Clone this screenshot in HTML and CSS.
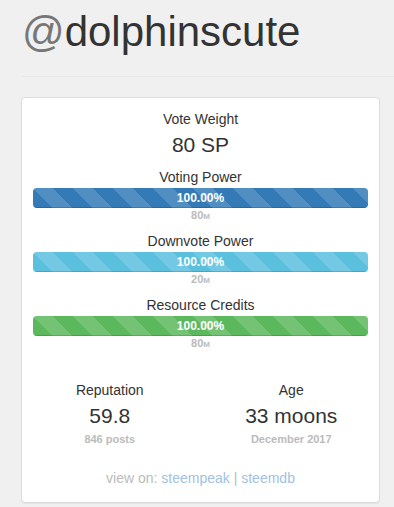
FILE: index.html
```html
<html>
<head>
    <title>@dolphinscute</title>
    <link rel="stylesheet" href="styles.css">
</head>
<body>
    <div class="page-header">
        <h1 class="username"><span class="at">@</span>dolphinscute</h1>
    </div>
    <div class="page">
        <div class="panel">
            <div class="stat">
                <div class="stat-label">Vote Weight</div>
                <div class="stat-value">80 SP</div>
            </div>

            <div class="meter">
                <div class="meter-label">Voting Power</div>
                <div class="progress">
                    <div class="progress-bar bar-primary" style="width: 100%">100.00%</div>
                </div>
                <div class="meter-caption">80<small>M</small></div>
            </div>
            <div class="meter">
                <div class="meter-label">Downvote Power</div>
                <div class="progress">
                    <div class="progress-bar bar-info" style="width: 100%">100.00%</div>
                </div>
                <div class="meter-caption">20<small>M</small></div>
            </div>
            <div class="meter">
                <div class="meter-label">Resource Credits</div>
                <div class="progress">
                    <div class="progress-bar bar-success" style="width: 100%">100.00%</div>
                </div>
                <div class="meter-caption">80<small>M</small></div>
            </div>

            <div class="stats-row">
                <div class="stat">
                    <div class="stat-label">Reputation</div>
                    <div class="stat-value">59.8</div>
                    <div class="meter-caption">846 posts</div>
                </div>
                <div class="stat">
                    <div class="stat-label">Age</div>
                    <div class="stat-value">33 moons</div>
                    <div class="meter-caption">December 2017</div>
                </div>
            </div>

            <div class="links">
                view on: <a href="#">steempeak</a> | <a href="#">steemdb</a>
            </div>
        </div>
    </div>
</body>
</html>
```

FILE: styles.css
```css
body {
    font-family: "Liberation Sans", Arial, sans-serif;
    font-size: 14px;
    line-height: 20px;
    color: #333;
    background-color: #f0f0f0;
    margin: 0;
    padding: 0;
}
.page-header {
    margin-left: 22px;
    border-bottom: 1px solid #e8e8e8;
    padding-bottom: 21px;
}
.username {
    margin: 9px 0 0;
    font-size: 42px;
    font-weight: normal;
    line-height: 46px;
    color: #333;
}
.username .at {
    color: #777;
}
.page {
    padding: 20px 14px 0 21px;
}
.panel {
    background: #fff;
    border: 1px solid #ddd;
    border-radius: 4px;
    box-shadow: 0 1px 1px rgba(0, 0, 0, 0.05);
    padding: 11px 11px 14px;
    text-align: center;
}
.stat-value {
    font-size: 21px;
    line-height: 31px;
}
.meter {
    margin-top: 7px;
}
.progress {
    height: 20px;
    margin-top: 1px;
    border-radius: 4px;
    overflow: hidden;
    background-color: #f5f5f5;
}
.progress-bar {
    height: 20px;
    line-height: 20px;
    font-size: 12px;
    font-weight: bold;
    color: #fff;
    text-align: center;
    box-shadow: inset 0 -1px 0 rgba(0, 0, 0, 0.15);
    background-image: linear-gradient(45deg, rgba(255, 255, 255, 0.15) 25%, transparent 25%, transparent 50%, rgba(255, 255, 255, 0.15) 50%, rgba(255, 255, 255, 0.15) 75%, transparent 75%, transparent);
    background-size: 40px 40px;
}
.bar-primary {
    background-color: #337ab7;
}
.bar-info {
    background-color: #5bc0de;
}
.bar-success {
    background-color: #5cb85c;
}
.meter-caption {
    font-size: 11px;
    line-height: 15px;
    font-weight: bold;
    color: #bbb;
}
.meter-caption small {
    font-size: 8px;
}
.stats-row {
    display: grid;
    grid-template-columns: 1fr 1fr;
    margin: 28px -14px 0;
}
.stats-row .stat-value {
    line-height: 32px;
}
.links {
    margin-top: 21px;
    color: #bbb;
}
.links a {
    color: #9fc2e2;
    text-decoration: none;
}
```
